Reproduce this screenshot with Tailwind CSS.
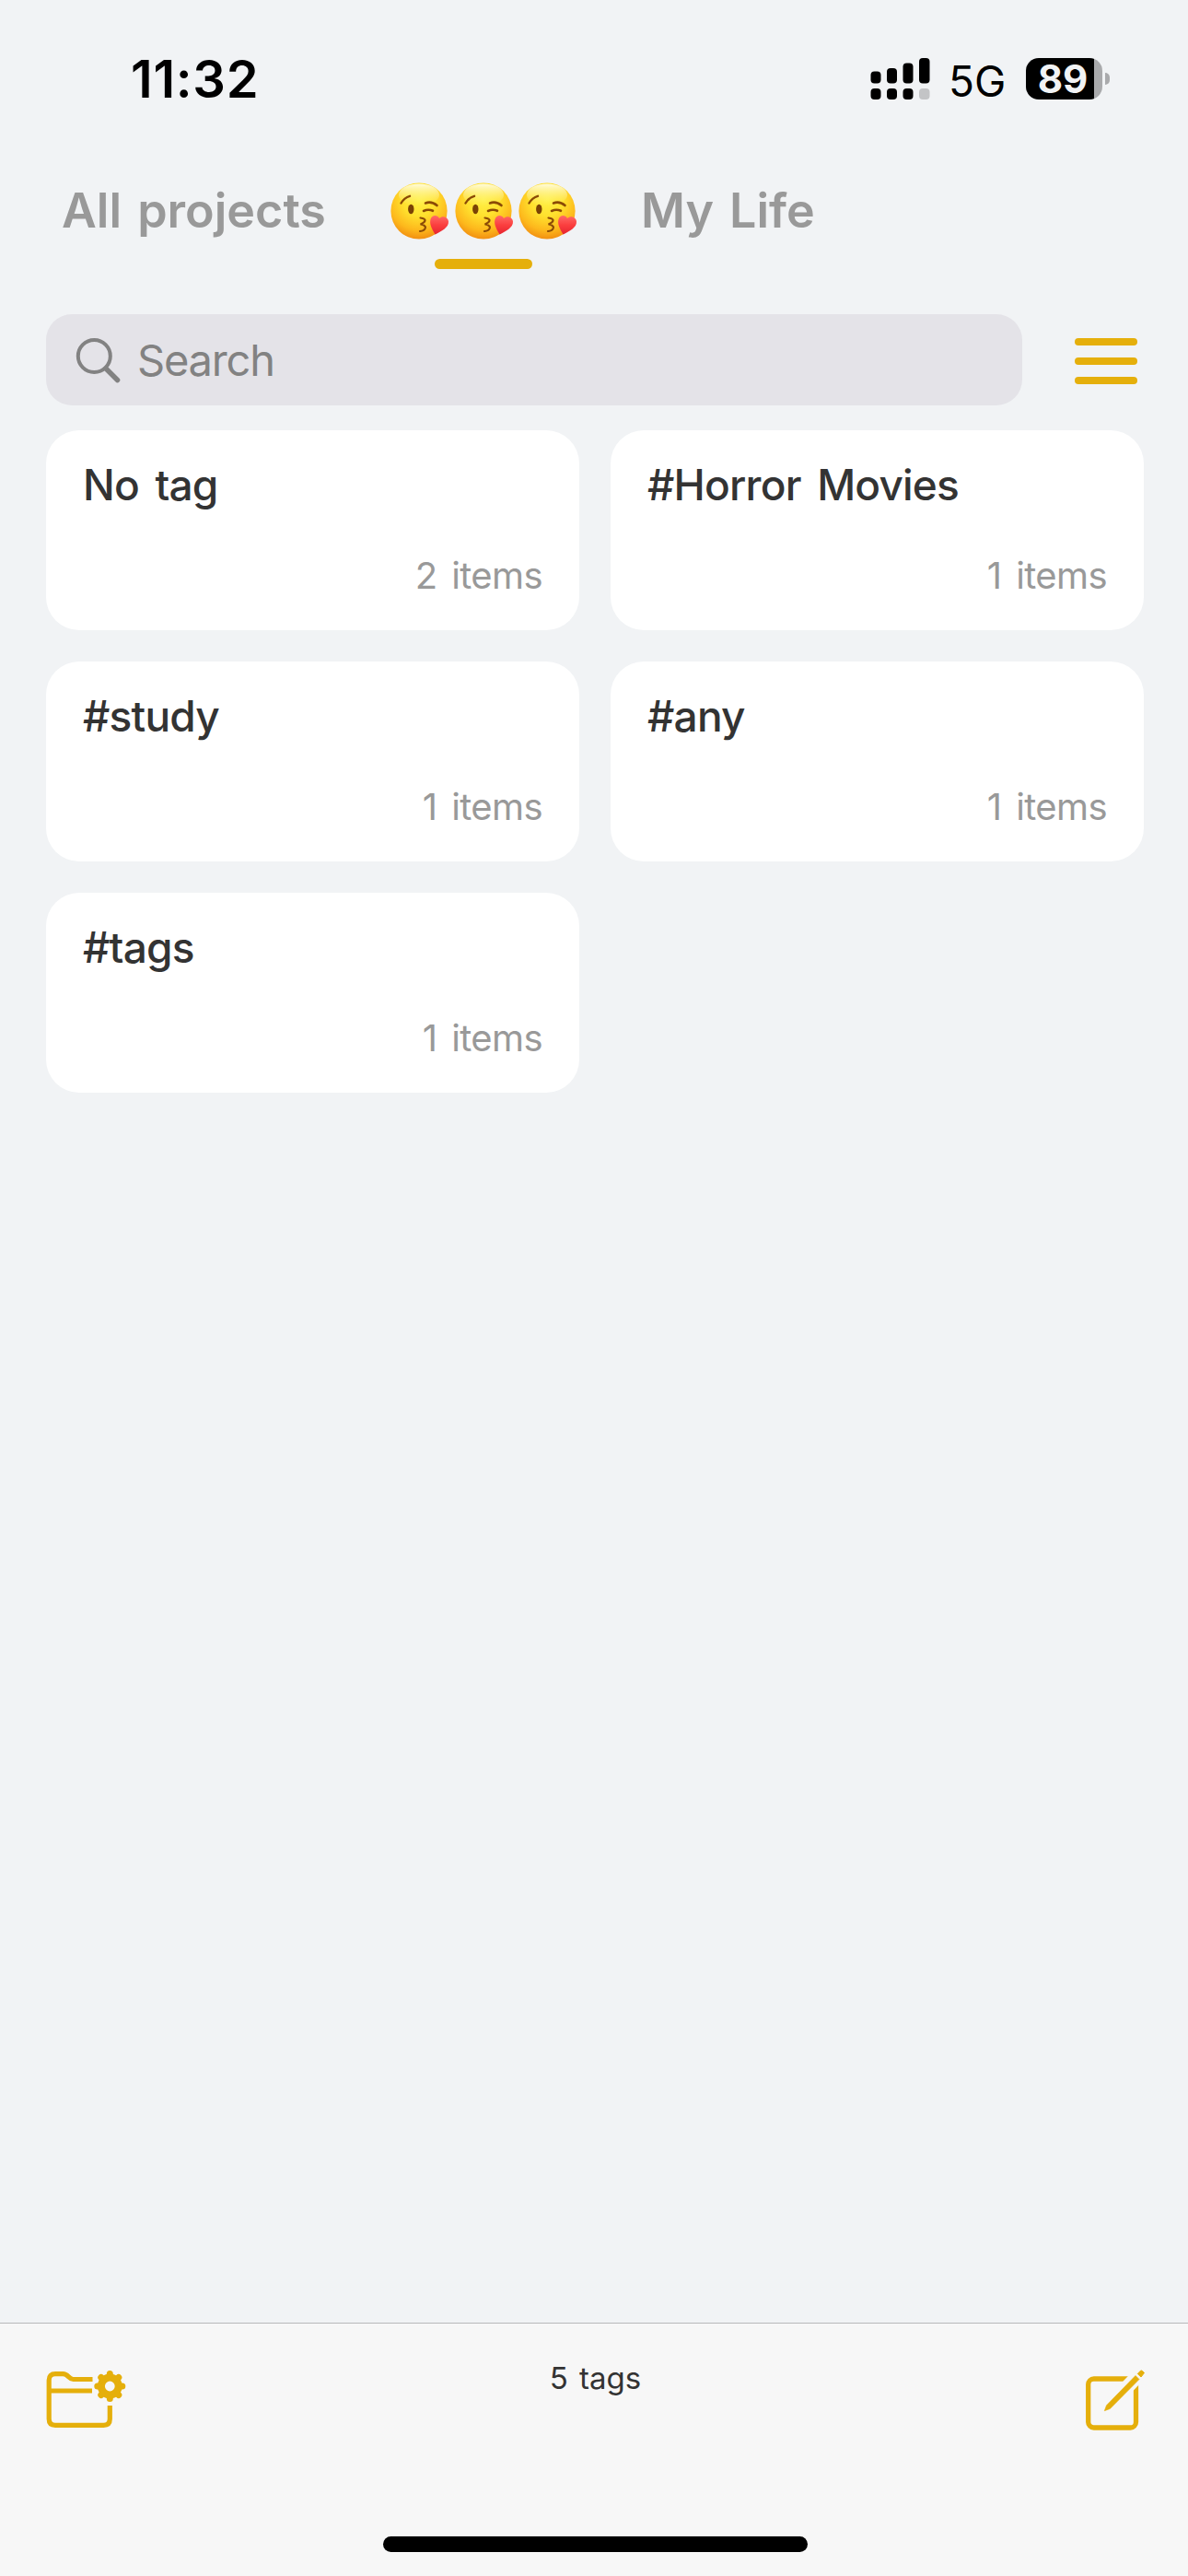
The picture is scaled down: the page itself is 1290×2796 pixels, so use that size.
<!DOCTYPE html>
<html lang="en">
<head>
  <meta charset="UTF-8">
  <meta name="viewport" content="width=device-width, initial-scale=1.0">
  <title>Tags</title>
  <script src="https://cdn.jsdelivr.net/npm/@tailwindcss/browser@4"></script>
</head>
<body class="bg-[#f1f3f5] font-['Inter','Liberation_Sans',sans-serif]">
  <!-- Shared symbols -->
  <svg class="absolute w-0 h-0">
    <defs>
      <radialGradient id="face" cx="50%" cy="30%" r="72%">
        <stop offset="0" stop-color="#fff047"/>
        <stop offset="0.4" stop-color="#ffe12e"/>
        <stop offset="0.75" stop-color="#fdb81c"/>
        <stop offset="1" stop-color="#f08a10"/>
      </radialGradient>
      <linearGradient id="shine" x1="0" y1="0" x2="0" y2="1">
        <stop offset="0" stop-color="#fffef0" stop-opacity="0.9"/>
        <stop offset="1" stop-color="#fff47a" stop-opacity="0"/>
      </linearGradient>
      <linearGradient id="heart" x1="0" y1="0" x2="0" y2="1">
        <stop offset="0" stop-color="#ff6a66"/>
        <stop offset="0.5" stop-color="#fb3f3f"/>
        <stop offset="1" stop-color="#e62430"/>
      </linearGradient>
    </defs>
    <symbol id="kiss" viewBox="0 0 64 62">
      <circle cx="31" cy="31" r="30.6" fill="url(#face)"/>
      <ellipse cx="31" cy="13.5" rx="22" ry="12" fill="url(#shine)"/>
      <g fill="none" stroke="#8a4a06" stroke-linecap="round">
        <path d="M11.5 22.5Q15 16.5 21 14.8" stroke-width="2.4"/>
        <path d="M38 22.5Q44.5 20 50.5 25" stroke-width="2.6"/>
        <path d="M36 31Q41 28.5 46 30.8" stroke-width="2.6"/>
        <path d="M32.5 38.5C36 39 38 40 37.5 41.5C37 43.5 34.5 44.5 32.5 45.5C35 45.5 38.5 47 37.8 49.5C37 52 34.5 52.8 32 53" stroke-width="2.2"/>
      </g>
      <ellipse cx="22.3" cy="29" rx="3.2" ry="5.2" fill="#7a4205"/>
      <path d="M48.5 56.5C45 50.5 42 45.500 43.500 40C45 35.500 50.500 34.500 53 39C57 35.500 62.500 38 63 42.500C63.500 49 55 53 48.500 56.500Z" fill="url(#heart)"/>
    </symbol>
  </svg>

  <div class="w-[1290px] h-[2796px] flex flex-col overflow-hidden">
    <!-- Status bar -->
    <header class="h-[171px] shrink-0 flex items-center justify-between pl-[142px] pr-[85px]">
      <span class="text-[56px] leading-none font-semibold tracking-[0.7px] text-black">11:32</span>
      <div class="flex items-center">
        <svg class="w-[65px] h-[46px]" viewBox="0 0 65 46">
          <rect x="0.5" y="14.5" width="11" height="13" rx="4"/>
          <rect x="18" y="11" width="11" height="16.5" rx="4"/>
          <rect x="35.5" y="5.5" width="11" height="22" rx="4"/>
          <rect x="53" y="0" width="11.5" height="27.5" rx="4"/>
          <rect x="0.5" y="33" width="11" height="12" rx="4"/>
          <rect x="18" y="33" width="11" height="12" rx="4"/>
          <rect x="35.5" y="33" width="11" height="12" rx="4"/>
          <rect x="53" y="33" width="11.5" height="12" rx="4" fill="#c3c4c6"/>
        </svg>
        <span class="ml-[20px] mt-[5px] w-[84px] text-[46px] leading-none text-black">5G</span>
        <div class="flex items-center gap-[3px]">
          <div class="w-[83px] h-[45px] rounded-[14px] bg-linear-to-r from-black from-[89%] to-[#a9aaac] to-[89%] flex items-center justify-center pr-[3px]">
            <span class="text-[42px] leading-[45px] font-bold text-[#f1f3f5]">89</span>
          </div>
          <div class="w-[5px] h-[13px] rounded-r-full bg-[#a9aaac]"></div>
        </div>
      </div>
    </header>

    <!-- Project tabs -->
    <nav class="h-[170px] shrink-0 flex items-start pt-[27px] pl-[67px] text-[52px] leading-[62px] font-semibold text-[#999]">
      <span class="w-[357px] whitespace-nowrap [word-spacing:4px]">All projects</span>
      <div class="w-[272px] flex flex-col">
        <div class="flex gap-[5.5px]">
          <svg class="w-[64px] h-[62px]"><use href="#kiss"/></svg>
          <svg class="w-[64px] h-[62px]"><use href="#kiss"/></svg>
          <svg class="w-[64px] h-[62px]"><use href="#kiss"/></svg>
        </div>
        <div class="mt-[21px] ml-[48px] w-[106px] h-[11px] rounded-full bg-[#e5af0b]"></div>
      </div>
      <span class="whitespace-nowrap [word-spacing:4px]">My Life</span>
    </nav>

    <!-- Search -->
    <div class="shrink-0 flex items-center justify-between pl-[50px] pr-[55px]">
      <div class="w-[1060px] h-[99px] rounded-[28px] bg-[#e4e3e8] flex items-center pl-[32px]">
        <svg class="w-[50px] h-[50px]" viewBox="0 0 50 50" fill="none" stroke="#828282">
          <circle cx="20.3" cy="20.5" r="17.5" stroke-width="4"/>
          <path d="M33 34L45.5 46.5" stroke-width="5.5" stroke-linecap="round"/>
        </svg>
        <span class="ml-[17px] text-[47px] leading-none tracking-[-1.2px] text-[#828282]">Search</span>
      </div>
      <div class="w-[68px] mt-[2px] flex flex-col gap-[13px]">
        <div class="h-[8px] rounded-full bg-[#e5af0b]"></div>
        <div class="h-[8px] rounded-full bg-[#e5af0b]"></div>
        <div class="h-[8px] rounded-full bg-[#e5af0b]"></div>
      </div>
    </div>

    <!-- Tag cards -->
    <main class="flex-1 grid grid-cols-2 auto-rows-[217px] content-start gap-[34px] pt-[27px] pl-[50px] pr-[48px]">
      <div class="bg-white rounded-[36px] px-[40px] pt-[29px] pb-[29px] flex flex-col justify-between">
        <h2 class="text-[46px] leading-[60px] font-medium tracking-[-0.8px] [word-spacing:6px] text-[#333]">No tag</h2>
        <p class="text-[40px] leading-[60px] text-right tracking-[-0.6px] [word-spacing:5px] text-[#999]">2 items</p>
      </div>
      <div class="bg-white rounded-[36px] px-[40px] pt-[29px] pb-[29px] flex flex-col justify-between">
        <h2 class="text-[46px] leading-[60px] font-medium tracking-[-0.8px] [word-spacing:6px] text-[#333]">#Horror Movies</h2>
        <p class="text-[40px] leading-[60px] text-right tracking-[-0.6px] [word-spacing:5px] text-[#999]">1 items</p>
      </div>
      <div class="bg-white rounded-[36px] px-[40px] pt-[29px] pb-[29px] flex flex-col justify-between">
        <h2 class="text-[46px] leading-[60px] font-medium tracking-[-0.8px] [word-spacing:6px] text-[#333]">#study</h2>
        <p class="text-[40px] leading-[60px] text-right tracking-[-0.6px] [word-spacing:5px] text-[#999]">1 items</p>
      </div>
      <div class="bg-white rounded-[36px] px-[40px] pt-[29px] pb-[29px] flex flex-col justify-between">
        <h2 class="text-[46px] leading-[60px] font-medium tracking-[-0.8px] [word-spacing:6px] text-[#333]">#any</h2>
        <p class="text-[40px] leading-[60px] text-right tracking-[-0.6px] [word-spacing:5px] text-[#999]">1 items</p>
      </div>
      <div class="bg-white rounded-[36px] px-[40px] pt-[29px] pb-[29px] flex flex-col justify-between">
        <h2 class="text-[46px] leading-[60px] font-medium tracking-[-0.8px] [word-spacing:6px] text-[#333]">#tags</h2>
        <p class="text-[40px] leading-[60px] text-right tracking-[-0.6px] [word-spacing:5px] text-[#999]">1 items</p>
      </div>
    </main>

    <!-- Bottom toolbar -->
    <footer class="h-[275px] shrink-0 bg-[#f7f7f7] border-t border-[#b8b8ba] flex flex-col items-center justify-between pb-[26px]">
      <div class="w-full flex items-start pt-[50px] pl-[50px] pr-[46px]">
        <svg class="w-[88px] h-[68px]" viewBox="0 0 88 68" fill="none" stroke="#e5af0b" stroke-width="5.2">
          <path d="M50.5 10.5H29.5C24.5 10.5 24 4.7 18.5 4.7H10Q3.2 4.7 3.2 11.5V53.5Q3.2 60.3 10 60.3H62.5Q69.3 60.3 69.3 53.5V39"/>
          <path d="M3.2 23H50"/>
          <circle cx="69.3" cy="18" r="9.4" stroke-width="8"/>
          <g stroke-width="7" stroke-linecap="round">
            <path d="M69.3 6V4.5M69.3 30V31.5M57.3 18H55.8M81.3 18H82.8"/>
            <path d="M60.8 9.5L59.8 8.5M77.8 9.5L78.8 8.5M60.8 26.5L59.8 27.5M77.8 26.5L78.8 27.5"/>
          </g>
        </svg>
        <span class="flex-1 mt-[-6px] pr-[24px] text-center text-[33px] leading-[30px] [word-spacing:3px] text-[#333]">5 tags</span>
        <svg class="w-[65px] h-[68px]" viewBox="0 0 65 68" fill="none" stroke="#e5af0b">
          <rect x="2.7" y="10" width="51.8" height="53" rx="6" stroke-width="5.3"/>
          <path d="M40 24L64 -1" stroke="#f7f7f7" stroke-width="15"/>
          <path d="M20.3 44.7L22.5 38.8L54 6.5L58 10.5L26.3 42.5Z" fill="#e5af0b" stroke="#e5af0b" stroke-width="0.6"/>
          <path d="M56.3 4.5L59.5 1.2Q60.5 0.6 61.5 1.5L63.5 3.5L60 8Z" fill="#e5af0b"/>
        </svg>
      </div>
      <div class="w-[461px] h-[17px] ml-[2px] rounded-full bg-black"></div>
    </footer>
  </div>
</body>
</html>
